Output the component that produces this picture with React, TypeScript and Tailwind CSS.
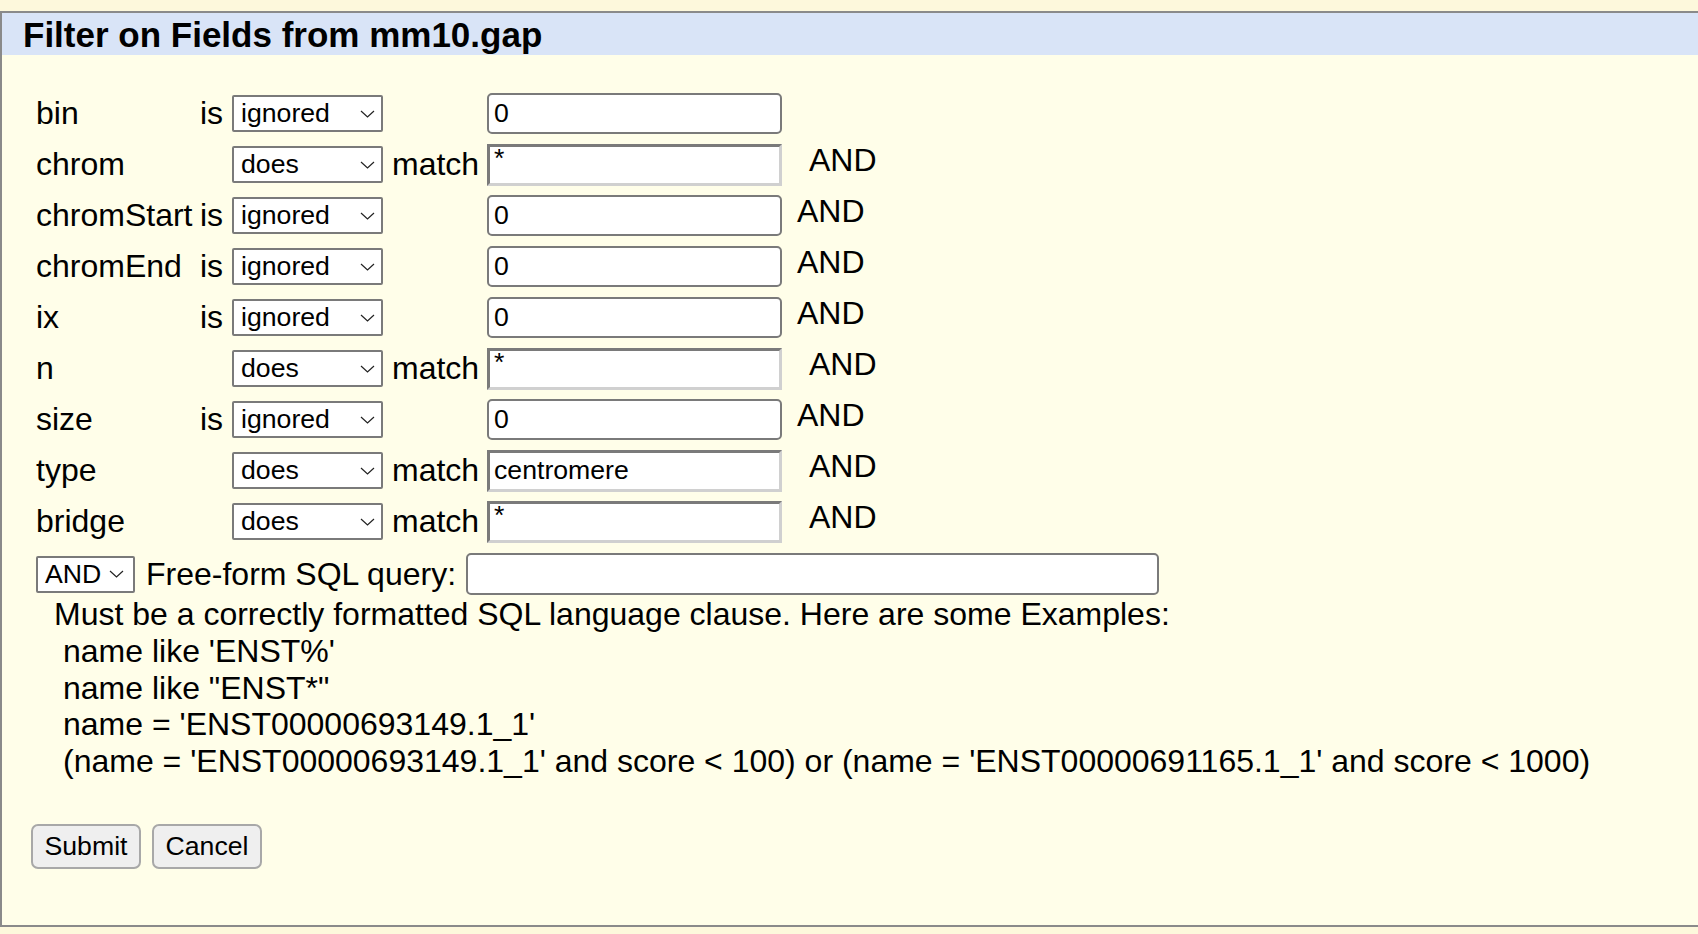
const rows = [
  { name: 'bin', kind: 'ignored', value: '0', and: false },
  { name: 'chrom', kind: 'does', value: '*', and: true },
  { name: 'chromStart', kind: 'ignored', value: '0', and: true },
  { name: 'chromEnd', kind: 'ignored', value: '0', and: true },
  { name: 'ix', kind: 'ignored', value: '0', and: true },
  { name: 'n', kind: 'does', value: '*', and: true },
  { name: 'size', kind: 'ignored', value: '0', and: true },
  { name: 'type', kind: 'does', value: 'centromere', and: true },
  { name: 'bridge', kind: 'does', value: '*', and: true },
];

const examples = [
  "name like 'ENST%'",
  'name like "ENST*"',
  "name = 'ENST00000693149.1_1'",
  "(name = 'ENST00000693149.1_1' and score < 100) or (name = 'ENST00000691165.1_1' and score < 1000)",
];

function Chevron() {
  return (
    <svg width="15" height="8" viewBox="0 0 15 8" className="shrink-0">
      <path d="M1 1 L7.5 7 L14 1" fill="none" stroke="#222" strokeWidth="1.2" />
    </svg>
  );
}

function FakeSelect({ label }: { label: string }) {
  return (
    <div className="w-[151px] h-[37px] shrink-0 bg-white border-2 border-[#7a7a7a] rounded-[2px] flex items-center justify-between pl-[7px] pr-[6px] text-[26.67px] leading-none">
      <span>{label}</span>
      <Chevron />
    </div>
  );
}

export default function App() {
  return (
    <div className="w-[1698px] h-[934px] overflow-hidden bg-[#fdf8dc] pt-[11px] text-black" style={{ fontFamily: '"Liberation Sans", Arial, sans-serif' }}>
      <div className="w-[1720px] h-[916px] bg-[#fffee9] border-l-2 border-t-2 border-b-2 border-[#8a8a8a] flex flex-col">
        {/* header */}
        <div className="h-[42px] bg-[#d9e4f7] flex items-center pl-[21px]">
          <h2 className="text-[35px] font-bold leading-none">Filter on Fields from mm10.gap</h2>
        </div>

        <div className="pt-[33px] pl-[34px] text-[32px] leading-[37px]">
          {/* field rows */}
          {rows.map((r) => (
            <div key={r.name} className="h-[51px] flex items-center">
              <span className="w-[164px] shrink-0">{r.name}</span>
              <span className="w-[32px] shrink-0">{r.kind === 'ignored' ? 'is' : ''}</span>
              <FakeSelect label={r.kind === 'ignored' ? 'ignored' : 'does'} />
              <span className="w-[104px] shrink-0 pl-[9px]">{r.kind === 'does' ? 'match' : ''}</span>
              {r.kind === 'does' ? (
                <div className="w-[295px] h-[42px] shrink-0 bg-white border-[3px] border-t-[#7a7a7a] border-l-[#7a7a7a] border-r-[#d0d0d0] border-b-[#d0d0d0] flex items-center px-[4px] text-[26.67px] leading-none">
                  <span className={r.value === '*' ? '-mt-[12px]' : ''}>{r.value}</span>
                </div>
              ) : (
                <div className="w-[295px] h-[41px] shrink-0 bg-white border-2 border-[#7a7a7a] rounded-[5px] flex items-center px-[5px] text-[26.67px] leading-none">
                  {r.value}
                </div>
              )}
              {r.and && (
                <span className={r.kind === 'does' ? 'ml-[27px] -mt-[8px]' : 'ml-[15px] -mt-[8px]'}>AND</span>
              )}
            </div>
          ))}

          {/* free-form row */}
          <div className="h-[44px] mt-[5px] flex items-center">
            <div className="w-[99px] h-[37px] shrink-0 bg-white border-2 border-[#7a7a7a] rounded-[2px] flex items-center pl-[7px] gap-[8px] text-[26.67px] leading-none">
              <span>AND</span>
              <Chevron />
            </div>
            <span className="ml-[11px]">Free-form SQL query:</span>
            <div className="ml-[10px] w-[693px] h-[42px] bg-white border-2 border-[#7a7a7a] rounded-[5px]" />
          </div>

          <div className="leading-[36.8px]">
            <p className="pl-[18px]">Must be a correctly formatted SQL language clause. Here are some Examples:</p>
            {examples.map((e) => (
              <p key={e} className="pl-[27px] whitespace-pre">{e}</p>
            ))}
          </div>

          <div className="mt-[44px] -ml-[5px] flex gap-[11px]">
            <button className="w-[110px] h-[45px] bg-[#efefef] border-2 border-[#a8a8a8] rounded-[7px] text-[26.67px] leading-none">Submit</button>
            <button className="w-[110px] h-[45px] bg-[#efefef] border-2 border-[#a8a8a8] rounded-[7px] text-[26.67px] leading-none">Cancel</button>
          </div>
        </div>
      </div>
    </div>
  );
}
